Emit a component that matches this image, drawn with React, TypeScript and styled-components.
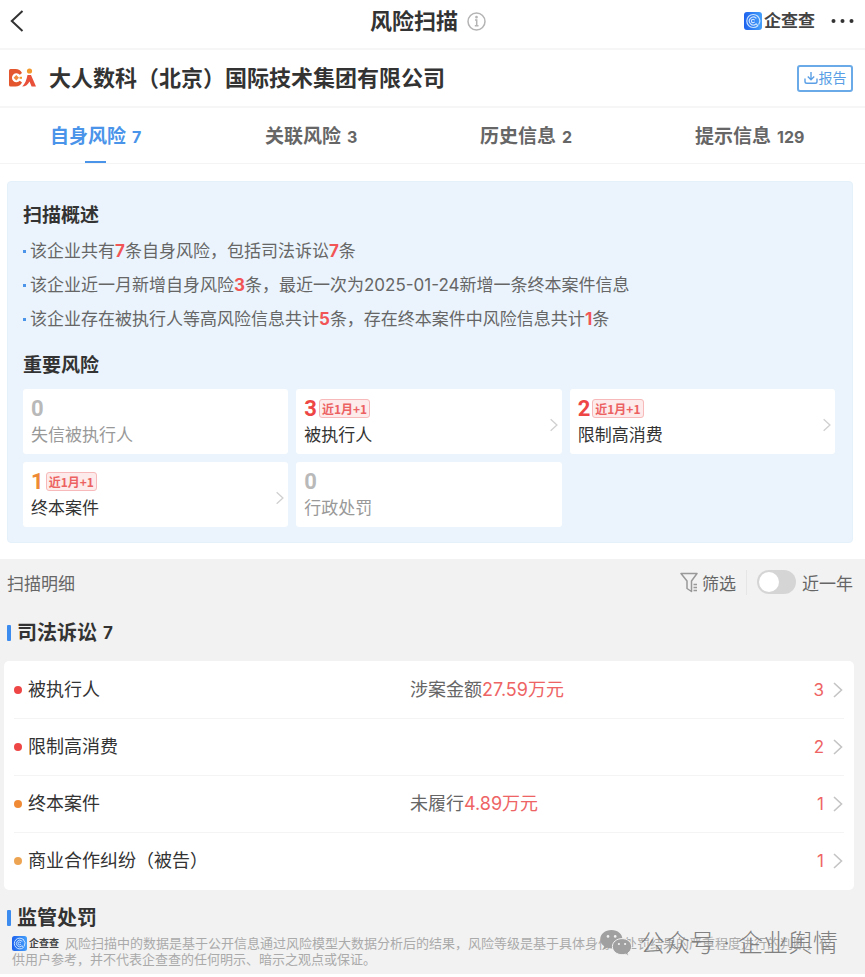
import React from "react";
import styled, { createGlobalStyle } from "styled-components";

const Global = createGlobalStyle`
  * { box-sizing: border-box; }
  body {
    margin: 0;
    background: #fff;
    color: #333;
    font-family: "Inter", "Noto Sans CJK SC", sans-serif;
    font-size: 17px;
  }
  button { font: inherit; color: inherit; background: none; border: 0; padding: 0; text-align: left; cursor: pointer; }
  h1, h2, h3, p, ul { margin: 0; padding: 0; }
  ul { list-style: none; }
`;

const Page = styled.div`
  position: relative;
  overflow: hidden;
`;

const TopBar = styled.header`
  display: grid;
  grid-template-columns: 1fr auto 1fr;
  align-items: center;
  height: 50px;
  padding: 0 11px 6px 2px;
  border-bottom: 2px solid #f6f6f6;
`;

const BackButton = styled.button`
  display: flex;
  justify-self: start;
  padding: 0 8px;
`;

const TitleGroup = styled.div`
  display: flex;
  align-items: center;
  gap: 9px;
`;

const PageTitle = styled.h1`
  font-size: 22px;
  line-height: 32px;
  font-weight: 700;
`;

const IconButton = styled.button`
  display: flex;
`;

const BrandGroup = styled.div`
  display: flex;
  align-items: center;
  justify-self: end;
  gap: 16px;
`;

const Brand = styled.span<{ $small?: boolean }>`
  display: inline-flex;
  align-items: center;
  gap: 2px;
  font-size: ${(p) => (p.$small ? 10 : 17)}px;
  line-height: ${(p) => (p.$small ? 14 : 24)}px;
  font-weight: 700;
  color: #444;
`;

const CompanyBar = styled.section`
  display: flex;
  align-items: center;
  height: 58px;
  padding: 0 12px 0 8px;
  gap: 13px;
  border-bottom: 2px solid #f6f6f6;
`;

const CompanyName = styled.h2`
  flex: 1;
  font-size: 22px;
  line-height: 32px;
  font-weight: 700;
`;

const ReportButton = styled.button`
  display: flex;
  align-items: center;
  justify-content: center;
  gap: 1px;
  width: 56px;
  height: 27px;
  border: 2px solid #6aaae8;
  border-radius: 3px;
  color: #5a9fe6;
  font-size: 14px;
  line-height: 20px;
`;

const Tabs = styled.nav`
  display: grid;
  grid-template-columns: repeat(4, 1fr);
  height: 56px;
  padding-right: 5px;
  border-bottom: 1px solid #f4f4f4;
`;

const Tab = styled.button<{ $active?: boolean }>`
  display: flex;
  flex-direction: column;
  align-items: center;
  justify-content: space-between;
  justify-self: start;
  margin-left: 50px;
  padding-top: 15px;
  font-size: 19px;
  line-height: 28px;
  font-weight: 700;
  white-space: nowrap;
  color: ${(p) => (p.$active ? "#4a94ea" : "#666")};
  small { font-size: 16px; font-weight: 700; margin-left: 6px; }
  &::after {
    content: "";
    width: 21px;
    height: 2px;
    background: ${(p) => (p.$active ? "#4a94ea" : "transparent")};
  }
`;

const Overview = styled.section`
  margin: 17px 12px 16px 7px;
  padding: 19px 17px 15px 15px;
  border: 1px solid #e4f1fb;
  border-radius: 4px;
  background: #ebf4fc;
`;

const BlockTitle = styled.h3`
  font-size: 19px;
  line-height: 30px;
  font-weight: 700;
`;

const Facts = styled.ul`
  padding: 3px 0 15px;
`;

const Fact = styled.li`
  display: flex;
  align-items: center;
  gap: 4px;
  line-height: 34px;
  color: #666;
  &::before {
    content: "";
    width: 3px;
    height: 3px;
    flex: none;
    background: #4a94ea;
  }
  b { color: #f25555; font-weight: 700; }
`;

const Cards = styled.div`
  display: grid;
  grid-template-columns: repeat(3, 1fr);
  gap: 8px;
  padding-top: 8px;
`;

type Tone = "red" | "orange" | "gray";
const tones: Record<Tone, string> = { red: "#ee4545", orange: "#ee8a35", gray: "#b9b9b9" };

const RiskCard = styled.button<{ $muted: boolean }>`
  display: flex;
  align-items: center;
  justify-content: space-between;
  height: 65px;
  padding: 0 3px 0 8px;
  border-radius: 3px;
  background: #fff;
  line-height: 26px;
  color: ${(p) => (p.$muted ? "#999" : "#333")};
  > svg { margin-top: 6px; }
`;

const CountLine = styled.span<{ $tone: Tone }>`
  display: flex;
  align-items: center;
  gap: 2px;
  font-family: "Roboto", sans-serif;
  font-size: 22px;
  line-height: 26px;
  font-weight: 700;
  color: ${(p) => tones[p.$tone]};
`;

const Tag = styled.span`
  padding: 0 2px;
  border: 1px solid #f7b9b9;
  border-radius: 3px;
  background: #fdeaea;
  color: #ec6161;
  font-family: "Noto Sans CJK SC", sans-serif;
  font-size: 12px;
  line-height: 17px;
  font-weight: 700;
`;

const Details = styled.main`
  background: #f2f2f2;
  margin-bottom: 3px;
  padding: 0 11px 7px 4px;
`;

const DetailBar = styled.div`
  display: flex;
  align-items: center;
  justify-content: space-between;
  height: 46px;
  margin-bottom: 13px;
  padding: 0 1px 0 3px;
  color: #666;
`;

const Tools = styled.div`
  display: flex;
  align-items: center;
`;

const FilterButton = styled.button`
  display: flex;
  align-items: center;
  gap: 4px;
  padding-right: 10px;
  border-right: 1px solid #e6e6e6;
`;

const SwitchLabel = styled.label`
  display: flex;
  align-items: center;
  gap: 6px;
  padding-left: 10px;
`;

const Switch = styled.input`
  appearance: none;
  width: 39px;
  height: 24px;
  margin: 0;
  padding: 2px;
  border-radius: 12px;
  background: #d5d5d5;
  &::before {
    content: "";
    display: block;
    width: 20px;
    height: 20px;
    border-radius: 50%;
    background: #fff;
  }
  &:checked { background: #4a94ea; }
  &:checked::before { margin-left: auto; }
`;

const GroupTitle = styled.h2`
  display: flex;
  align-items: center;
  gap: 6px;
  padding-left: 3px;
  font-size: 20px;
  line-height: 30px;
  font-weight: 700;
  &::before {
    content: "";
    width: 4px;
    height: 16px;
    border-radius: 1px;
    background: #3c8cf0;
  }
  small { font-size: 17px; font-weight: 700; }
`;

const RiskList = styled.ul`
  margin: 13px 0;
  padding: 1px 10px;
  border-radius: 5px;
  background: #fff;
`;

const RiskItem = styled.li`
  & + & { border-top: 1px solid #f4f4f4; }
`;

const RiskRow = styled.button<{ $tone: string }>`
  display: grid;
  grid-template-columns: 8px minmax(0, 382px) 1fr auto 12px;
  align-items: center;
  width: 100%;
  height: 56px;
  font-size: 18px;
  line-height: 28px;
  &::before {
    content: "";
    width: 8px;
    height: 8px;
    border-radius: 50%;
    background: ${(p) => p.$tone};
  }
`;

const RowName = styled.span`
  padding-left: 6px;
`;

const RowNote = styled.span`
  padding-left: 6px;
  color: #666;
  em { font-style: normal; color: #ee6464; }
`;

const RowCount = styled.span`
  padding-right: 8px;
  color: #ee6464;
  font-size: 17px;
`;

const Disclaimer = styled.p`
  padding: 2px 0 0 8px;
  font-size: 13px;
  line-height: 16px;
  color: #aaa;
  white-space: nowrap;
  ${Brand} { margin-right: 6px; vertical-align: top; height: 16px; }
`;

const Line = styled.span`
  display: block;
`;

const Watermark = styled.div`
  position: absolute;
  right: 27px;
  bottom: 16px;
  display: flex;
  align-items: center;
  gap: 8px;
  font-size: 25px;
  line-height: 36px;
  font-weight: 300;
  color: #808080;
  pointer-events: none;
`;

const Chevron = ({ size = 12, color = "#c4c4c4" }: { size?: number; color?: string }) => (
  <svg width={size} height={size + 4} viewBox="0 0 12 16" fill="none" stroke={color} strokeWidth="1.6" aria-hidden="true">
    <path d="M2 1l7.500 7L2 15" />
  </svg>
);

const BrandMark = ({ size }: { size: number }) => (
  <svg width={size} height={size} viewBox="0 0 18 18" aria-hidden="true">
    <defs>
      <linearGradient id="qcc" x1="0" x2="1">
        <stop offset="0" stopColor="#1d62ee" />
        <stop offset="1" stopColor="#45a0fa" />
      </linearGradient>
    </defs>
    <rect width="18" height="18" rx="3" fill="url(#qcc)" />
    <g fill="none" stroke="#c9e3ff" strokeWidth="1.200" strokeLinecap="round">
      <path d="M13.800 4.300A6.500 6.500 0 1 0 13.800 13.700L12.400 12.200" />
      <path d="M12 6A4 4 0 1 0 12 12" />
      <path d="M10.300 7.800A1.700 1.700 0 1 0 10.300 10.200" />
      <path d="M13.800 4.300A6.500 6.500 0 0 1 14.800 12.200" />
    </g>
  </svg>
);

const CompanyLogo = () => (
  <svg width="28" height="20" viewBox="0 0 28 20" aria-hidden="true">
    <path fill="#e4572e" d="M2.500 1H7.500C10.500 1 12.800 2.500 14 5L11.800 6.800A4.500 4.500 0 1 0 11.800 12.800L14 14.500C12.800 17 10.500 18.500 7.500 18.500H2.500Q1 18.500 1 17V2.500Q1 1 2.500 1Z" />
    <path fill="#f08a3c" d="M8.300 7L11 9.800L8.300 12.600L5.600 9.800Z" />
    <path fill="#f39a2e" d="M11.500 8.800H14V10.800H11.500Z" />
    <circle cx="21.500" cy="3" r="2.600" fill="#f39a2e" />
    <path fill="#e8503a" d="M19.500 7H23L28 18.500H23.600L21.500 13.500C20 16.500 17.500 18.500 14.200 18.500C17 16 18.500 12 19.500 7Z" />
  </svg>
);

const WechatMark = () => (
  <svg width="32" height="27" viewBox="0 0 32 27" aria-hidden="true">
    <path fill="#a0a0a0" d="M11.500 0C5 0 .3 4 .3 9.200c0 3 1.500 5.400 4 7.100L3.200 19.800l4-2c1.400.4 2.700.6 4.300.6C17.500 18.400 22.400 14.400 22.400 9.200S17.800 0 11.500 0Z" />
    <path fill="#a0a0a0" stroke="#f2f2f2" strokeWidth="1" d="M22 8.600c-5.400 0-9.600 3.500-9.600 8s4.200 8.100 9.600 8.100c1.200 0 2.400-.2 3.500-.5l3.200 1.700-.8-2.900c2.200-1.500 3.700-3.800 3.700-6.400 0-4.500-4.300-8-9.600-8Z" />
    <g fill="#f2f2f2">
      <circle cx="8" cy="6.400" r="1.300" />
      <circle cx="15.200" cy="6.400" r="1.300" />
      <circle cx="18.900" cy="14" r="1.100" />
      <circle cx="25.100" cy="14" r="1.100" />
    </g>
  </svg>
);

const tabs = [
  ["自身风险", 7],
  ["关联风险", 3],
  ["历史信息", 2],
  ["提示信息", 129],
] as const;

const cards: { count: number; name: string; tone: Tone }[] = [
  { count: 0, name: "失信被执行人", tone: "gray" },
  { count: 3, name: "被执行人", tone: "red" },
  { count: 2, name: "限制高消费", tone: "red" },
  { count: 1, name: "终本案件", tone: "orange" },
  { count: 0, name: "行政处罚", tone: "gray" },
];

const rows = [
  { name: "被执行人", tone: "#ee4545", label: "涉案金额", amount: "27.59万元", count: 3 },
  { name: "限制高消费", tone: "#ee4545", count: 2 },
  { name: "终本案件", tone: "#f08a35", label: "未履行", amount: "4.89万元", count: 1 },
  { name: "商业合作纠纷（被告）", tone: "#eda452", count: 1 },
];

export default function App() {
  return (
    <Page>
      <Global />
      <TopBar>
        <BackButton aria-label="返回">
          <svg width="14" height="22" viewBox="0 0 14 22" fill="none" stroke="#333" strokeWidth="2" aria-hidden="true">
            <path d="M12.500 1L1.800 11L12.500 21" />
          </svg>
        </BackButton>
        <TitleGroup>
          <PageTitle>风险扫描</PageTitle>
          <IconButton aria-label="说明">
            <svg width="19" height="19" viewBox="0 0 19 19" fill="none" stroke="#b4b4b4" strokeWidth="1.500" aria-hidden="true">
              <circle cx="9.500" cy="9.500" r="8.500" />
              <path d="M8 8H9.700V13.500M7.800 13.700H11.500" />
              <circle cx="9.500" cy="5.200" r=".6" fill="#b4b4b4" />
            </svg>
          </IconButton>
        </TitleGroup>
        <BrandGroup>
          <Brand>
            <BrandMark size={18} />
            企查查
          </Brand>
          <IconButton aria-label="更多">
            <svg width="23" height="6" viewBox="0 0 23 6" fill="#333" aria-hidden="true">
              <circle cx="2.500" cy="3" r="2" />
              <circle cx="11.500" cy="3" r="2" />
              <circle cx="20.500" cy="3" r="2" />
            </svg>
          </IconButton>
        </BrandGroup>
      </TopBar>

      <CompanyBar>
        <CompanyLogo />
        <CompanyName>大人数科（北京）国际技术集团有限公司</CompanyName>
        <ReportButton>
          <svg width="14" height="14" viewBox="0 0 14 14" fill="none" stroke="currentColor" strokeWidth="1.400" aria-hidden="true">
            <path d="M7 1V8.500M3.800 5.600L7 8.700L10.200 5.600M1 7.500V10.500Q1 12.300 2.800 12.300H11.200Q13 12.300 13 10.500V7.500" />
          </svg>
          报告
        </ReportButton>
      </CompanyBar>

      <Tabs>
        {tabs.map(([name, count], i) => (
          <Tab key={name} $active={i === 0}>
            <span>
              {name}
              <small>{count}</small>
            </span>
          </Tab>
        ))}
      </Tabs>

      <Overview>
        <BlockTitle>扫描概述</BlockTitle>
        <Facts>
          <Fact>
            <span>该企业共有<b>7</b>条自身风险，包括司法诉讼<b>7</b>条</span>
          </Fact>
          <Fact>
            <span>该企业近一月新增自身风险<b>3</b>条，最近一次为2025-01-24新增一条终本案件信息</span>
          </Fact>
          <Fact>
            <span>该企业存在被执行人等高风险信息共计<b>5</b>条，存在终本案件中风险信息共计<b>1</b>条</span>
          </Fact>
        </Facts>
        <BlockTitle>重要风险</BlockTitle>
        <Cards>
          {cards.map((c) => (
            <RiskCard key={c.name} $muted={c.count === 0}>
              <span>
                <CountLine $tone={c.tone}>
                  {c.count}
                  {c.count > 0 && <Tag>近1月+1</Tag>}
                </CountLine>
                {c.name}
              </span>
              {c.count > 0 && <Chevron size={10} color="#d0d0d0" />}
            </RiskCard>
          ))}
        </Cards>
      </Overview>

      <Details>
        <DetailBar>
          <span>扫描明细</span>
          <Tools>
            <FilterButton>
              <svg width="18" height="21" viewBox="0 0 18 21" fill="none" stroke="#999" strokeWidth="1.500" strokeLinejoin="round" aria-hidden="true">
                <path d="M1 1.500H17L11.500 9V19.500L7 16.500V9Z" />
                <path d="M13.500 12.500H17M13.500 15.500H17M13.500 18.500H17" />
              </svg>
              筛选
            </FilterButton>
            <SwitchLabel>
              <Switch type="checkbox" role="switch" />
              近一年
            </SwitchLabel>
          </Tools>
        </DetailBar>

        <GroupTitle>
          司法诉讼 <small>7</small>
        </GroupTitle>
        <RiskList>
          {rows.map((r) => (
            <RiskItem key={r.name}>
              <RiskRow $tone={r.tone}>
                <RowName>{r.name}</RowName>
                <RowNote>
                  {r.label}
                  <em>{r.amount}</em>
                </RowNote>
                <RowCount>{r.count}</RowCount>
                <Chevron />
              </RiskRow>
            </RiskItem>
          ))}
        </RiskList>

        <GroupTitle>监管处罚</GroupTitle>
        <Disclaimer>
          <Line>
            <Brand $small>
              <BrandMark size={15} />
              企查查
            </Brand>
            风险扫描中的数据是基于公开信息通过风险模型大数据分析后的结果，风险等级是基于具体身份、处罚结果的严重程度进行的判断，仅
          </Line>
          <Line>供用户参考，并不代表企查查的任何明示、暗示之观点或保证。</Line>
        </Disclaimer>
      </Details>

      <Watermark>
        <WechatMark />
        <span>公众号</span>
        <span>·</span>
        <span>企业舆情</span>
      </Watermark>
    </Page>
  );
}
